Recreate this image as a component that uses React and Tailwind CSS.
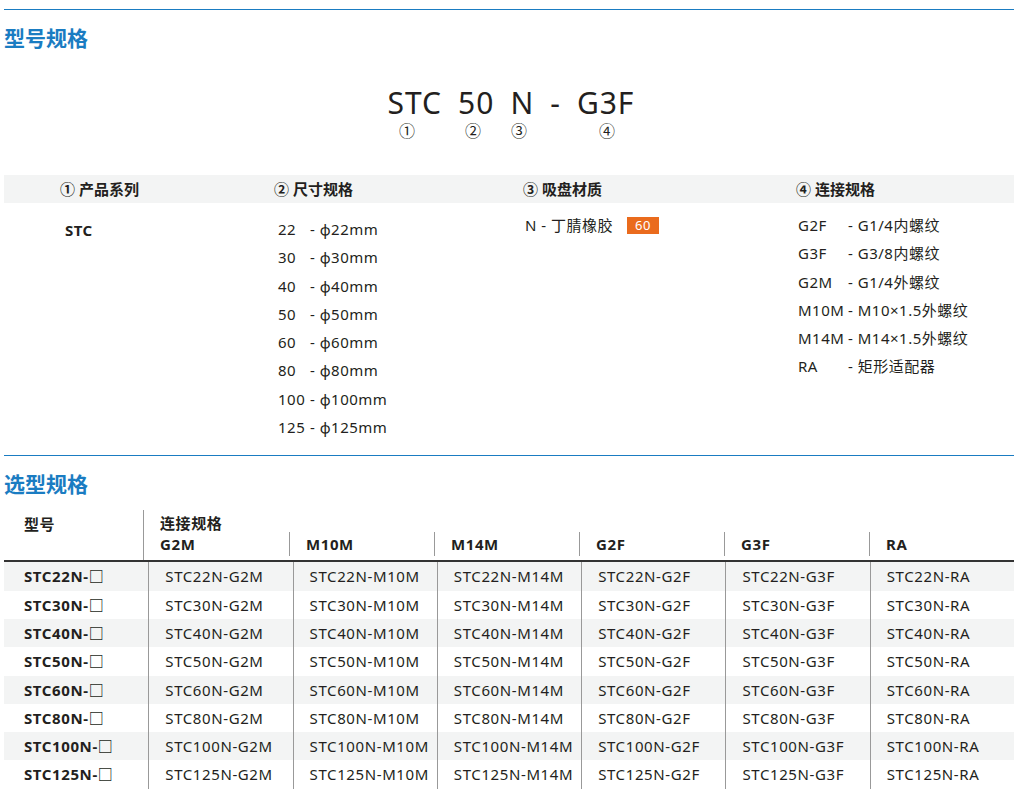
const sizes = [['22 ', 'φ22mm'], ['30 ', 'φ30mm'], ['40 ', 'φ40mm'], ['50 ', 'φ50mm'], ['60 ', 'φ60mm'], ['80 ', 'φ80mm'], ['100', 'φ100mm'], ['125', 'φ125mm']]
const conns = [['G2F', '- G1/4内螺纹'], ['G3F', '- G3/8内螺纹'], ['G2M', '- G1/4外螺纹'], ['M10M', '- M10×1.5外螺纹'], ['M14M', '- M14×1.5外螺纹'], ['RA', '- 矩形适配器']]
const cols = ['G2M', 'M10M', 'M14M', 'G2F', 'G3F', 'RA']
const nums = ['22', '30', '40', '50', '60', '80', '100', '125']

export default function App() {
    return (
        <div className="w-[1018px] bg-white text-[#231f20] pt-[9px]" style={{ fontFamily: '"Noto Sans","Noto Sans CJK SC",sans-serif' }}>
            <div className="mx-[4px] h-px bg-[#1a7cc2]" />
            <h2 className="px-[4px] mt-[14px] text-[21px] leading-[28px] font-bold text-[#1a7cc2]">型号规格</h2>

            <div className="flex flex-col items-center mt-[34px] ml-[4px]">
                <div className="flex text-[30px] leading-[34px] tracking-[1px] gap-[16px]">
                    <span>STC</span><span>50</span><span>N</span><span>-</span><span>G3F</span>
                </div>
                <div className="relative w-[260px] h-[22px] text-[16px] leading-[22px]">
                    <span className="absolute left-[18px]">①</span>
                    <span className="absolute left-[84px]">②</span>
                    <span className="absolute left-[130px]">③</span>
                    <span className="absolute left-[218px]">④</span>
                </div>
            </div>

            <div className="mt-[33px] mx-[4px] h-[28px] bg-[#f3f4f4] flex items-center text-[15px] font-bold">
                <div className="w-[212px] pl-[56px]">① 产品系列</div>
                <div className="w-[247px] pl-[58px]">② 尺寸规格</div>
                <div className="w-[273px] pl-[60px]">③ 吸盘材质</div>
                <div className="pl-[60px]">④ 连接规格</div>
            </div>

            <div className="mx-[4px] flex text-[15px] tracking-[0.5px] leading-[28.3px]">
                <div className="w-[212px] pl-[61px] pt-[13px] font-bold">STC</div>
                <div className="w-[247px] pl-[62px] pt-[12px]">
                    {sizes.map(([a, b]) => (
                        <div key={a} className="flex"><span className="w-[32px]">{a}</span><span>- {b}</span></div>
                    ))}
                </div>
                <div className="w-[273px] pl-[62px] pt-[8px] flex items-start">
                    <span>N - 丁腈橡胶</span>
                    <span className="ml-[14px] mt-[6px] bg-[#ea6b1d] text-white text-[13px] leading-[17px] px-[8px]">60</span>
                </div>
                <div className="pl-[62px] pt-[8px]">
                    {conns.map(([a, b]) => (
                        <div key={a} className="flex"><span className="w-[50px]">{a}</span><span>{b}</span></div>
                    ))}
                </div>
            </div>

            <div className="mt-[14px] mx-[4px] h-px bg-[#1a7cc2]" />
            <h2 className="px-[4px] mt-[14px] text-[21px] leading-[28px] font-bold text-[#1a7cc2]">选型规格</h2>

            <div className="mx-[4px] mt-[12px] text-[15px] tracking-[0.6px]">
                <div className="flex border-b-2 border-[#333]">
                    <div className="w-[145px] pl-[20px] font-bold leading-[24px] pt-[2px] h-[50px]">型号</div>
                    <div className="flex-1 border-l border-[#999]">
                        <div className="pl-[16px] font-bold leading-[18px] pt-[4px]">连接规格</div>
                        <div className="flex">
                            {cols.map((c, i) => (
                                <div key={c} className={`w-[145px] h-[24px] pl-[16px] font-bold leading-[24px] ${i > 0 ? 'border-l border-[#999]' : ''}`}>{c}</div>
                            ))}
                        </div>
                    </div>
                </div>
                {nums.map((n, r) => (
                    <div key={n} className={`flex h-[28.3px] leading-[28px] ${r % 2 === 0 ? 'bg-[#f3f4f4]' : 'bg-white'}`}>
                        <div className="w-[145px] pl-[20px] font-bold">STC{n}N-□</div>
                        {cols.map(c => (
                            <div key={c} className="w-[145px] pl-[16px] border-l border-[#999]">STC{n}N-{c}</div>
                        ))}
                    </div>
                ))}
            </div>
        </div>
    )
}
